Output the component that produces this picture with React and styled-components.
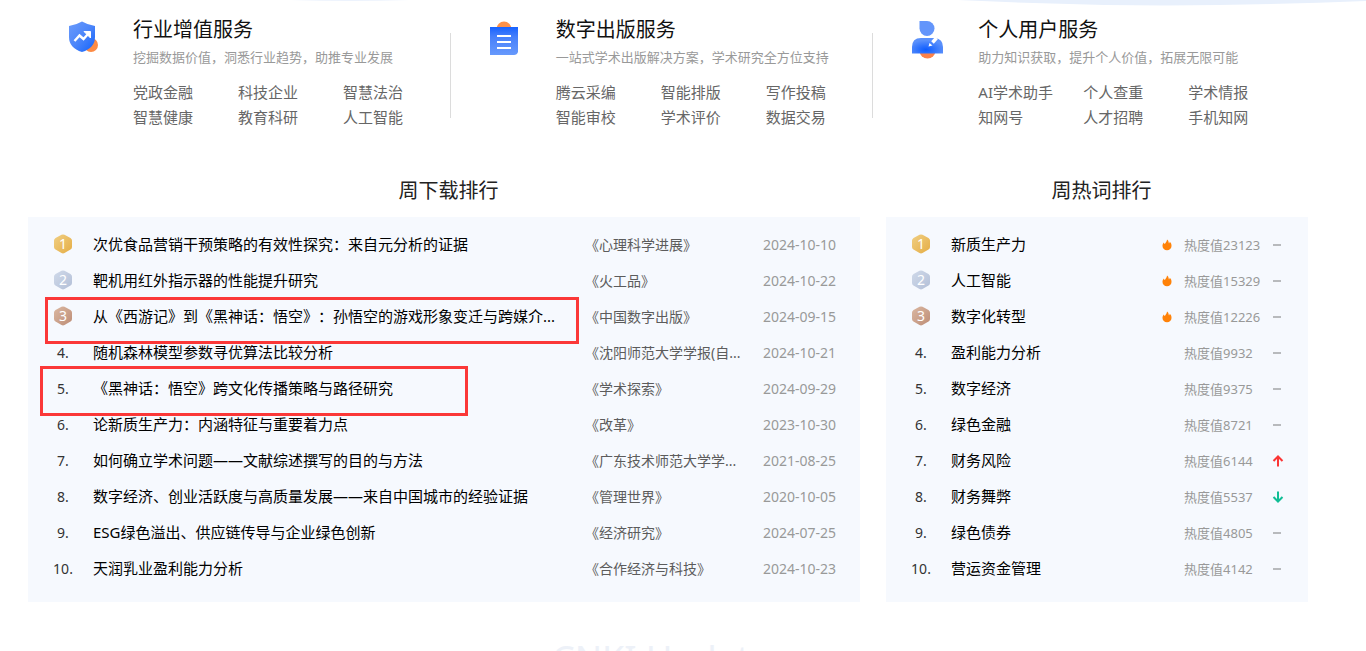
import React from "react";
import styled, { createGlobalStyle } from "styled-components";

const GlobalStyle = createGlobalStyle`
  html { scrollbar-width: none; }
  body {
    margin: 0;
    background: #fff;
    font-family: "Noto Sans", "Noto Sans CJK SC", sans-serif;
    text-spacing-trim: space-all;
  }
  *, *::before, *::after { box-sizing: border-box; }
  h2, h3, p, ul, ol { margin: 0; padding: 0; font-weight: 400; }
  ul, ol { list-style: none; }
  a { color: inherit; text-decoration: none; }
`;

const Page = styled.main`
  position: relative;
  padding: 15px 58px 0 28px;
`;

const Backdrop = styled.svg`
  position: absolute;
  top: 0;
  left: 0;
  width: 100%;
  height: 6px;
  display: block;
`;

const Services = styled.section`
  position: relative;
  display: grid;
  grid-template-columns: repeat(3, 1fr);
  padding-right: 12px;
`;

const Service = styled.article`
  display: flex;
  gap: 25px;
  padding-left: 36px;
  position: relative;

  &:not(:last-child)::after {
    content: "";
    position: absolute;
    right: 0;
    top: 18px;
    width: 1px;
    height: 85px;
    background: #dcdcdc;
  }
`;

const ServiceIcon = styled.svg`
  flex: none;
  width: 44px;
  height: 48px;
`;

const ServiceBody = styled.div`
  flex: 1;
  min-width: 0;
`;

const ServiceName = styled.h3`
  font-size: 20px;
  line-height: 30px;
  color: #111;
`;

const ServiceNote = styled.p`
  font-size: 13px;
  line-height: 24px;
  color: #999;
  white-space: nowrap;
`;

const ServiceLinks = styled.ul`
  display: grid;
  grid-template-columns: repeat(3, 105px);
  padding-top: 11px;
  font-size: 15px;
  line-height: 25px;
  color: #666;
  white-space: nowrap;
`;

const Rankings = styled.div`
  display: grid;
  grid-template-columns: 832fr 422fr;
  column-gap: 26px;
  padding-top: 45px;
`;

const RankTitle = styled.h2`
  padding: 0 0 10px 9px;
  font-size: 20px;
  line-height: 32px;
  text-align: center;
  color: #222;
`;

const RankList = styled.ol`
  padding: 9px 24px 16px 25px;
  background: #f6f9fe;
`;

const Row = styled.li`
  position: relative;
  display: flex;
  align-items: center;
  height: 36px;
  white-space: nowrap;
`;

const Rank = styled.span`
  flex: none;
  display: flex;
  justify-content: center;
  width: 20px;
  margin-right: 20px;
  font-size: 14px;
  color: #333;
`;

const Title = styled.a`
  flex: 1;
  min-width: 0;
  overflow: hidden;
  font-size: 15px;
  line-height: 24px;
  color: #000;
`;

const Journal = styled.a`
  flex: none;
  width: 178px;
  font-size: 14px;
  color: #5c5c5c;
`;

const DateText = styled.time`
  flex: none;
  width: 73px;
  font-size: 14px;
  color: #999;
`;

const Heat = styled.span`
  flex: none;
  width: 78px;
  margin: 0 10px 0 11px;
  font-size: 13px;
  color: #999;
`;

const Glyph = styled.svg`
  flex: none;
  width: 12px;
  height: 12px;
  margin-top: 2px;
`;

const Highlight = styled.span`
  position: absolute;
  top: ${(p) => (p.$size === "wide" ? "-1px" : "-4px")};
  left: ${(p) => (p.$size === "wide" ? "-8px" : "-13px")};
  width: ${(p) => (p.$size === "wide" ? "534px" : "428px")};
  height: ${(p) => (p.$size === "wide" ? "47px" : "50px")};
  border: 3px solid #fb3838;
  pointer-events: none;
`;

const UpdateTitle = styled.h2`
  padding: 34px 14px 0 0;
  font-size: 36px;
  line-height: 46px;
  text-align: center;
  color: #edf1f8;
`;

const icons = {
  shield: (
    <ServiceIcon viewBox="0 1 44 48" aria-hidden="true">
      <defs>
        <linearGradient id="shield" x1="0" y1="0" x2="1" y2="1">
          <stop offset="0" stopColor="#6b9bfb" />
          <stop offset="0.5" stopColor="#4c86fa" />
          <stop offset="1" stopColor="#1262fb" />
        </linearGradient>
      </defs>
      <circle cx="27" cy="31" r="7" fill="#fd8b44" />
      <path d="M18 7.5Q24 11 31 12V23Q31 34 18 38Q5 34 5 23V12Q12 11 18 7.5Z" fill="url(#shield)" />
      <path d="M10.5 27L15.5 21.5L19.5 25L24.5 19.5" fill="none" stroke="#fff" strokeWidth="2.4" />
      <path d="M20 17.5H26.5V24Z" fill="#fff" stroke="#fff" />
    </ServiceIcon>
  ),
  clipboard: (
    <ServiceIcon viewBox="1 0 44 48" aria-hidden="true">
      <defs>
        <linearGradient id="board" x1="0" y1="0" x2="0" y2="1">
          <stop offset="0" stopColor="#1762ff" />
          <stop offset="0.35" stopColor="#4680fb" />
          <stop offset="1" stopColor="#6799fc" />
        </linearGradient>
      </defs>
      <circle cx="18" cy="14" r="7.5" fill="#fd9148" />
      <path d="M4 12H32V37Q31 40 28 40H4Z" fill="url(#board)" />
      <path d="M11 21H25M11 27H25M11 33H25" stroke="#fff" strokeWidth="2" />
    </ServiceIcon>
  ),
  person: (
    <ServiceIcon viewBox="0 1 44 48" aria-hidden="true">
      <defs>
        <radialGradient id="torso" cx="0.45" cy="0.75" r="0.6">
          <stop offset="0" stopColor="#0d5cff" />
          <stop offset="1" stopColor="#5a90fb" />
        </radialGradient>
      </defs>
      <circle cx="18.500" cy="36.500" r="8" fill="#fd8148" />
      <path d="M10.500 7H18A7.500 7.500 0 1 1 10.500 14.500Z" fill="#6395fb" />
      <path d="M3 39.500V33Q3 24 12 24H26Q34 25 34 33V39.500Z" fill="url(#torso)" />
      <path d="M27.500 24L23.500 28.500" stroke="#fff" strokeWidth="3.4" />
      <path d="M19.500 32.500L20.500 29L23.500 31.500Z" fill="#fff" />
    </ServiceIcon>
  ),
};

const services = [
  {
    icon: "shield",
    name: "行业增值服务",
    note: "挖掘数据价值，洞悉行业趋势，助推专业发展",
    links: ["党政金融", "科技企业", "智慧法治", "智慧健康", "教育科研", "人工智能"],
  },
  {
    icon: "clipboard",
    name: "数字出版服务",
    note: "一站式学术出版解决方案，学术研究全方位支持",
    links: ["腾云采编", "智能排版", "写作投稿", "智能审校", "学术评价", "数据交易"],
  },
  {
    icon: "person",
    name: "个人用户服务",
    note: "助力知识获取，提升个人价值，拓展无限可能",
    links: ["AI学术助手", "个人查重", "学术情报", "知网号", "人才招聘", "手机知网"],
  },
];

const downloads = [
  { title: "次优食品营销干预策略的有效性探究：来自元分析的证据", journal: "《心理科学进展》", date: "2024-10-10" },
  { title: "靶机用红外指示器的性能提升研究", journal: "《火工品》", date: "2024-10-22" },
  { title: "从《西游记》到《黑神话：悟空》：孙悟空的游戏形象变迁与跨媒介...", journal: "《中国数字出版》", date: "2024-09-15", mark: "wide" },
  { title: "随机森林模型参数寻优算法比较分析", journal: "《沈阳师范大学学报(自...", date: "2024-10-21" },
  { title: "《黑神话：悟空》跨文化传播策略与路径研究", journal: "《学术探索》", date: "2024-09-29", mark: "narrow" },
  { title: "论新质生产力：内涵特征与重要着力点", journal: "《改革》", date: "2023-10-30" },
  { title: "如何确立学术问题——文献综述撰写的目的与方法", journal: "《广东技术师范大学学...", date: "2021-08-25" },
  { title: "数字经济、创业活跃度与高质量发展——来自中国城市的经验证据", journal: "《管理世界》", date: "2020-10-05" },
  { title: "ESG绿色溢出、供应链传导与企业绿色创新", journal: "《经济研究》", date: "2024-07-25" },
  { title: "天润乳业盈利能力分析", journal: "《合作经济与科技》", date: "2024-10-23" },
];

const hotWords = [
  { word: "新质生产力", heat: 23123, hot: true },
  { word: "人工智能", heat: 15329, hot: true },
  { word: "数字化转型", heat: 12226, hot: true },
  { word: "盈利能力分析", heat: 9932 },
  { word: "数字经济", heat: 9375 },
  { word: "绿色金融", heat: 8721 },
  { word: "财务风险", heat: 6144, trend: "up" },
  { word: "财务舞弊", heat: 5537, trend: "down" },
  { word: "绿色债券", heat: 4805 },
  { word: "营运资金管理", heat: 4142 },
];

const medalColors = [
  ["#f0cf83", "#e5ad45"],
  ["#d0daea", "#b3bfd7"],
  ["#dbb8a2", "#bd8d76"],
];

function Medal({ place }) {
  const [light, dark] = medalColors[place - 1];
  const id = `medal-${place}`;
  return (
    <svg width="20" height="20" viewBox="0 0 20 20" role="img" aria-label={String(place)}>
      <defs>
        <linearGradient id={id} x1="0" y1="0" x2="1" y2="1">
          <stop offset="0" stopColor={light} />
          <stop offset="1" stopColor={dark} />
        </linearGradient>
      </defs>
      <path
        d="M8.500 0.800Q10 0 11.500 0.800L17.500 4Q19 5 19 6.500V13Q19 14.500 17.500 15.500L11.500 19Q10 19.800 8.500 19L2.500 15.500Q1 14.500 1 13V6.500Q1 5 2.500 4Z"
        fill={`url(#${id})`}
      />
      <text x="10" y="15" fontSize="14" textAnchor="middle" fill="#fff">
        {place}
      </text>
    </svg>
  );
}

const RankMark = ({ place }) => <Rank>{place <= 3 ? <Medal place={place} /> : `${place}.`}</Rank>;

const Flame = () => (
  <Glyph viewBox="0 0 12 12" aria-hidden="true">
    <path
      d="M6 0.500C8 2 7.500 3.500 8 4.500C8.600 4 8.800 3.300 8.700 2.800C10.300 4 10.500 5.500 10.500 7C10.500 9.500 8.500 11.200 6 11.200C3.500 11.200 1.500 9.500 1.500 7C1.500 5.500 2 4.300 2.900 3.400C3 4.300 3.300 4.800 3.900 5C4.500 3.800 5.900 2.700 6 0.500Z"
      fill="#ff8208"
    />
  </Glyph>
);

function Trend({ direction }) {
  if (direction === "up") {
    return (
      <Glyph viewBox="0 0 12 12" aria-label="上升">
        <path d="M6 11.500V2M1.500 6L6 1.500L10.500 6" fill="none" stroke="#fb3535" strokeWidth="2" />
      </Glyph>
    );
  }
  if (direction === "down") {
    return (
      <Glyph viewBox="0 0 12 12" aria-label="下降">
        <path d="M6 0.500V10M1.500 6L6 10.500L10.500 6" fill="none" stroke="#10bd95" strokeWidth="2" />
      </Glyph>
    );
  }
  return (
    <Glyph viewBox="0 0 12 12" aria-label="持平">
      <path d="M1 6H9" stroke="#b8babd" strokeWidth="2" />
    </Glyph>
  );
}

export default function App() {
  return (
    <>
      <GlobalStyle />
      <Page>
        <Backdrop viewBox="0 0 1366 6" preserveAspectRatio="none" aria-hidden="true">
          <path d="M958 0Q1060 5 1165 5.500Q1270 5 1366 1V0Z" fill="#e8f0fc" />
          <path d="M290 0Q350 2 410 0Z" fill="#edf3fd" />
        </Backdrop>

        <Services>
          {services.map((s) => (
            <Service key={s.name}>
              {icons[s.icon]}
              <ServiceBody>
                <ServiceName>{s.name}</ServiceName>
                <ServiceNote>{s.note}</ServiceNote>
                <ServiceLinks>
                  {s.links.map((l) => (
                    <li key={l}>
                      <a href="#">{l}</a>
                    </li>
                  ))}
                </ServiceLinks>
              </ServiceBody>
            </Service>
          ))}
        </Services>

        <Rankings>
          <section>
            <RankTitle>周下载排行</RankTitle>
            <RankList>
              {downloads.map((d, i) => (
                <Row key={d.title}>
                  <RankMark place={i + 1} />
                  <Title href="#">{d.title}</Title>
                  <Journal href="#">{d.journal}</Journal>
                  <DateText dateTime={d.date}>{d.date}</DateText>
                  {d.mark && <Highlight $size={d.mark} />}
                </Row>
              ))}
            </RankList>
          </section>
          <section>
            <RankTitle>周热词排行</RankTitle>
            <RankList>
              {hotWords.map((h, i) => (
                <Row key={h.word}>
                  <RankMark place={i + 1} />
                  <Title href="#">{h.word}</Title>
                  {h.hot && <Flame />}
                  <Heat>热度值{h.heat}</Heat>
                  <Trend direction={h.trend} />
                </Row>
              ))}
            </RankList>
          </section>
        </Rankings>

        <UpdateTitle>CNKI Update</UpdateTitle>
      </Page>
    </>
  );
}
